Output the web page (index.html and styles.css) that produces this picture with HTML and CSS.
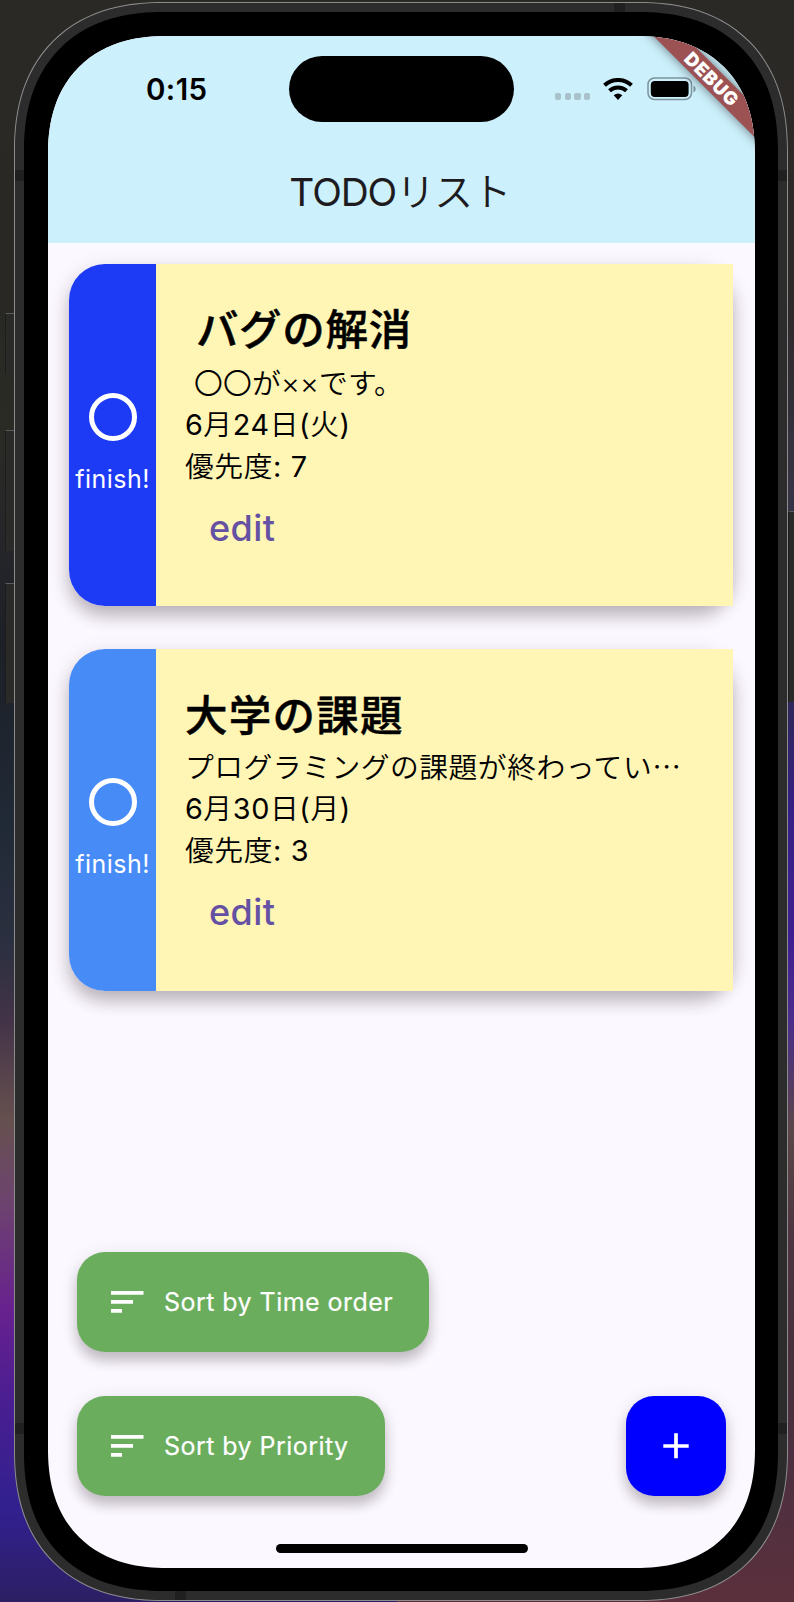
FILE: index.html
```html
<!DOCTYPE html>
<html lang="ja">
<head>
<meta charset="utf-8">
<title>TODOリスト</title>
<link rel="stylesheet" href="styles.css">
</head>
<body>
<i class="side-button mute"></i><i class="side-button volume-up"></i><i class="side-button volume-down"></i><i class="side-button power"></i>
<div class="phone">
  <i class="band band-top"></i><i class="band band-bottom"></i><i class="band band-left upper"></i><i class="band band-left lower"></i><i class="band band-right upper"></i><i class="band band-right lower"></i>
  <div class="bezel">
    <div class="screen">
      <header class="app-bar">
        <div class="status">
          <span class="time">0:15</span>
          <span class="island"></span>
          <span class="dots"><i></i><i></i><i></i><i></i></span>
          <svg class="wifi" width="30" height="22" viewBox="0 0 30 22"><path d="M1.500 7.200C9 .2 21 .2 28.500 7.200" fill="none" stroke="#000" stroke-width="4"/><path d="M6.500 12.800C11 8.400 19 8.400 23.500 12.800" fill="none" stroke="#000" stroke-width="4"/><path d="M10.700 17.300Q15 13.700 19.300 17.300L15 22Z"/></svg>
          <svg class="battery" width="50" height="24" viewBox="0 0 50 24"><rect x="1" y="1" width="43.500" height="21.500" rx="6.500" fill="none" stroke="#7d939b" stroke-width="1.500"/><rect x="3.800" y="4" width="37.800" height="16" rx="4"/><path d="M46.500 8.500Q48.700 9.500 48.700 12T46.500 15.500Z" fill="#7d939b"/></svg>
        </div>
        <h1><span class="latin">TODO</span>リスト</h1>
      </header>
      <main>
        <article class="card">
          <div class="finish high"><i class="ring"></i><span>finish!</span></div>
          <div class="body">
            <h2 class="inset">バグの解消</h2>
            <p class="inset-small">〇〇が××です。</p>
            <p class="meta"><span class="latin">6</span>月<span class="latin">24</span>日<span class="latin">(</span>火<span class="latin">)</span></p>
            <p class="meta">優先度<span class="latin">: 7</span></p>
            <a class="edit">edit</a>
          </div>
        </article>
        <article class="card second">
          <div class="finish low"><i class="ring"></i><span>finish!</span></div>
          <div class="body">
            <h2>大学の課題</h2>
            <p>プログラミングの課題が終わってい<span class="ellipsis">⋯</span></p>
            <p class="meta"><span class="latin">6</span>月<span class="latin">30</span>日<span class="latin">(</span>月<span class="latin">)</span></p>
            <p class="meta">優先度<span class="latin">: 3</span></p>
            <a class="edit">edit</a>
          </div>
        </article>
      </main>
      <footer>
        <div class="sort time-order"><svg width="33" height="22" viewBox="0 0 33 22"><path fill="#fff" d="M0 0H32.500V3.700H0ZM0 9H22V12.700H0ZM0 18H11V21.700H0Z"/></svg><span>Sort by Time order</span></div>
        <div class="actions">
          <div class="sort priority"><svg width="33" height="22" viewBox="0 0 33 22"><path fill="#fff" d="M0 0H32.500V3.700H0ZM0 9H22V12.700H0ZM0 18H11V21.700H0Z"/></svg><span>Sort by Priority</span></div>
          <div class="add"><svg width="26" height="26" viewBox="0 0 26 26"><path d="M13 .3V25.300M.3 13H25.700" stroke="#fff" stroke-width="3.700"/></svg></div>
        </div>
        <div class="home"></div>
      </footer>
      <div class="debug">DEBUG</div>
    </div>
  </div>
</div>
</body>
</html>
```
FILE: styles.css
```css
* { box-sizing: border-box; }
body {
  position: relative;
  margin: 0;
  width: 794px;
  height: 1602px;
  padding: 2px 0 0 14px;
  overflow: hidden;
  font-family: Inter, "Noto Sans CJK JP", sans-serif;
  background:
    linear-gradient(#2b2926 0, #2d2929 300px, #373344 490px, #30265f 720px, #351f85 810px, #3f1f90 940px, #4b2d8b 1020px, #5a4648 1130px, #4c3340 1250px, #47303c 1350px, #4b2f40 1450px, #5b303c 1602px) right / 397px 100% no-repeat,
    linear-gradient(#2b2926 0, #292825 300px, #2a2b25 430px, #26262a 540px, #1d2026 640px, #202936 820px, #2c3040 950px, #433348 1020px, #66504f 1120px, #6d446e 1200px, #68218f 1310px, #4a1e91 1400px, #31208f 1510px, #2d1f63 1602px);
}
.phone {
  position: relative;
  width: 774px;
  height: 1599px;
  padding: 9px;
  border: 1px solid #8c8c8c;
  border-radius: 134px;
  background: #2c2c2c;
}
.bezel {
  position: relative;
  height: 100%;
  padding: 24px 23px 23px 24px;
  border-radius: 125px;
  background: #000;
}
.screen {
  position: relative;
  display: flex;
  flex-direction: column;
  width: 707px;
  height: 1532px;
  overflow: hidden;
  border-radius: 108px;
  background: #fcf8ff;
}
@supports (corner-shape: superellipse(1.2)) {
  .phone { border-radius: 149px; corner-shape: superellipse(1.2); }
  .bezel { border-radius: 139px; corner-shape: superellipse(1.2); }
  .screen { border-radius: 119px; corner-shape: superellipse(1.2); }
}
.band { position: absolute; background: #202020; }
.band-top { top: 0; left: 599px; width: 11px; height: 10px; }
.band-bottom { bottom: 0; left: 160px; width: 11px; height: 10px; }
.band-left { left: 0; width: 10px; height: 11px; }
.band-right { right: 0; width: 10px; height: 11px; }
.upper { top: 167px; }
.lower { top: 1420px; }
.side-button { position: absolute; left: 5px; width: 9px; background: #2a2a29; border-top: 1px solid #5a5a5a; border-left: 1px solid #1c1c1c; }
.mute { top: 313px; height: 61px; }
.volume-up { top: 430px; height: 121px; }
.volume-down { top: 583px; height: 120px; }
.power { left: 788px; top: 511px; height: 191px; }

.app-bar { height: 207px; background: #ccf0fc; }
.status { display: flex; align-items: center; height: 106px; }
.time { width: 143px; margin-left: 98px; font-size: 29.500px; font-weight: 600; letter-spacing: .4px; }
.island { width: 225px; height: 66px; border-radius: 33px; background: #000; }
.dots { display: flex; gap: 3.500px; margin: 15px 0 0 41px; }
.dots i { width: 6.200px; height: 6.200px; border-radius: 2px; background: #a8c1ca; }
.wifi { margin-left: 13px; }
.battery { margin-left: 14px; }
h1 { margin: 20px 3px 0 0; font-size: 38.800px; line-height: 60px; font-weight: 350; letter-spacing: -.65px; text-align: center; color: #1d1b20; }
.latin { font-weight: 400; }
h1 .latin { font-weight: 380; letter-spacing: -1.100px; }

main { padding: 21px 22px 0 21.400px; }
.card { display: flex; width: 664px; height: 342px; margin-bottom: 43px; border-radius: 36px; box-shadow: 0 10px 16px rgba(50, 40, 50, .28), 0 5px 24px rgba(50, 40, 50, .09); }
.finish { display: flex; flex-direction: column; align-items: center; width: 86.500px; padding-top: 129px; border-radius: 36px 0 0 36px; color: #fff; }
.high { background: #1d3af5; }
.low { background: #478bf7; }
.ring { width: 48px; height: 48px; border: 5px solid #fff; border-radius: 50%; }
.finish span { margin-top: 22px; font-size: 25px; line-height: 32px; font-weight: 400; letter-spacing: .5px; white-space: nowrap; }
.body { flex: 1; padding: 32px 0 0 29px; background: #fff5b4; }
h2 { margin: 0; height: 67px; font-size: 42.500px; line-height: 67px; font-weight: 500; letter-spacing: .7px; -webkit-text-stroke: .5px #000; }
.second h2 { position: relative; top: 1px; letter-spacing: 1.300px; }
.inset { padding-left: 11px; }
p { margin: 0; height: 41.300px; font-size: 28.800px; line-height: 41px; font-weight: 350; letter-spacing: .5px; white-space: nowrap; }
.second p { position: relative; top: -1px; }
.meta { letter-spacing: .6px; }
.inset-small { padding-left: 9px; letter-spacing: .2px; }
.edit { display: block; margin-top: 19px; padding-left: 24px; font-size: 36px; line-height: 44px; font-weight: 500; letter-spacing: .5px; color: #6551a3; }
.second .edit { margin-top: 18px; }

footer { display: flex; flex-direction: column; margin-top: auto; padding: 0 29px 15px; }
.sort { display: flex; align-items: center; gap: 20px; height: 100.500px; padding-left: 34px; border-radius: 28px; background: #6aad5d; color: #fff; font-size: 25px; font-weight: 400; letter-spacing: .45px; white-space: nowrap; -webkit-text-stroke: .2px #fff; box-shadow: 0 9px 12px rgba(50, 40, 50, .24), 0 3px 18px rgba(50, 40, 50, .1); }
.time-order { width: 352px; }
.priority { width: 308px; }
.actions { display: flex; justify-content: space-between; margin-top: 43.500px; }
.add { display: flex; align-items: center; justify-content: center; width: 100.500px; height: 100.500px; border-radius: 28px; background: #00f; box-shadow: 0 9px 12px rgba(50, 40, 50, .24), 0 3px 18px rgba(50, 40, 50, .1); }
.home { align-self: center; width: 252px; height: 9px; margin-top: 48px; border-radius: 5px; background: #000; }
.debug { position: absolute; left: 574px; top: 32px; width: 180px; height: 22px; line-height: 22px; text-align: center; font-size: 18.500px; font-weight: 900; letter-spacing: .7px; color: #fff; background: #9c5152; transform: rotate(45deg); box-shadow: 0 0 11px rgba(0, 0, 0, .5); }
```
